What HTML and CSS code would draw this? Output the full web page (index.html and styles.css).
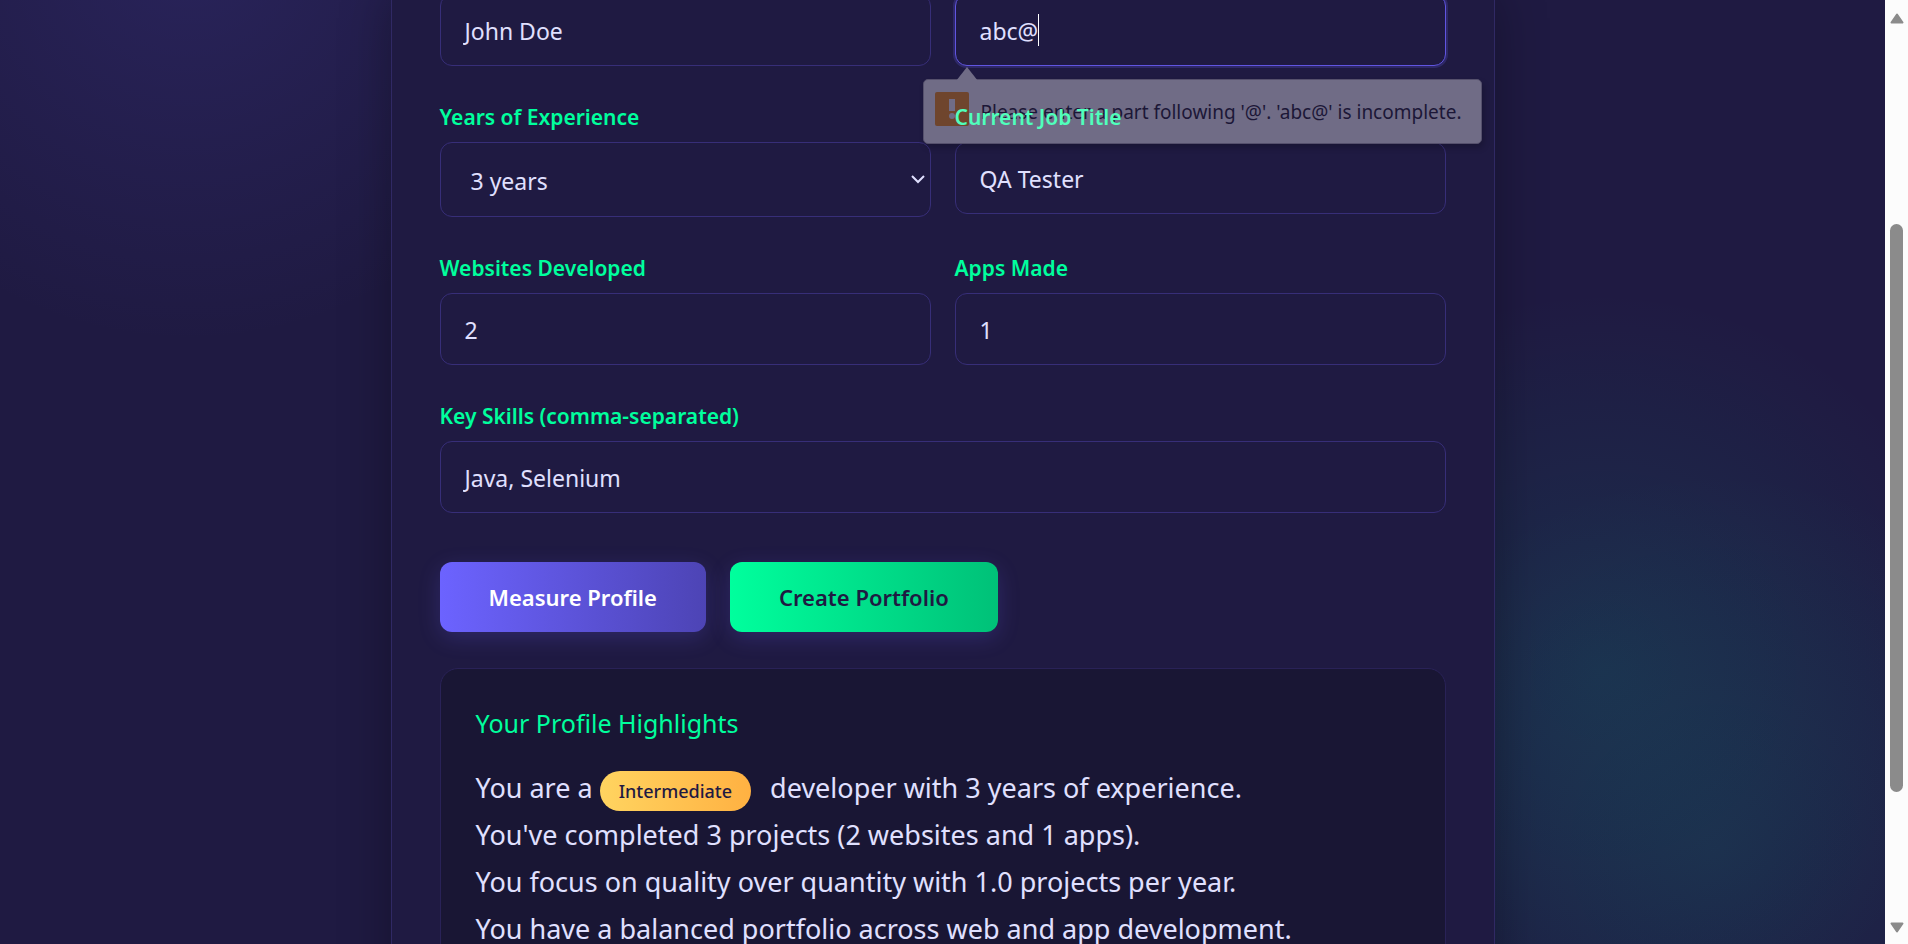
FILE: index.html
```html
<!DOCTYPE html>
<html lang="en">
<head>
<meta charset="utf-8">
<title>Developer Profile</title>
<link rel="stylesheet" href="styles.css">
</head>
<body>
<div class="page">
  <main class="card">
    <form class="form" novalidate>
      <div class="grid">
        <div class="field">
          <input class="control" type="text" aria-label="Full name" value="John Doe">
        </div>
        <div class="field">
          <div class="email">
            <input class="control control-active" type="text" inputmode="email" aria-label="Email" value="abc@">
            <span class="caret-line" aria-hidden="true"><span class="caret-text">abc@</span></span>
            <div class="tip" role="alert">
              <svg class="tip-arrow" viewBox="0 0 22 14" aria-hidden="true"><path d="M0 14 11 0l11 14z"/></svg>
              <svg class="tip-icon" viewBox="0 0 34 34" aria-hidden="true"><rect width="34" height="34" rx="2" fill="#6f452d"/><path d="M14 7h6v12h-6z" fill="#706c86"/><circle cx="17" cy="24" r="3" fill="#706c86"/></svg>
              <span>Please enter a part following '@'. 'abc@' is incomplete.</span>
            </div>
          </div>
        </div>
        <div class="field">
          <label class="label" for="years">Years of Experience</label>
          <div class="select-wrap">
            <select class="control select" id="years"><option>3 years</option></select>
            <svg class="chevron" viewBox="0 0 14 9" aria-hidden="true"><path d="M1 1l6 6 6-6"/></svg>
          </div>
        </div>
        <div class="field">
          <label class="label label-over" for="title">Current Job Title</label>
          <input class="control" id="title" type="text" value="QA Tester">
        </div>
        <div class="field">
          <label class="label" for="sites">Websites Developed</label>
          <input class="control" id="sites" type="text" inputmode="numeric" value="2">
        </div>
        <div class="field">
          <label class="label" for="apps">Apps Made</label>
          <input class="control" id="apps" type="text" inputmode="numeric" value="1">
        </div>
        <div class="field field-wide">
          <label class="label" for="skills">Key Skills (comma-separated)</label>
          <input class="control" id="skills" type="text" value="Java, Selenium">
        </div>
      </div>
      <div class="actions">
        <button class="btn btn-primary" type="button">Measure Profile</button>
        <button class="btn btn-accent" type="button">Create Portfolio</button>
      </div>
    </form>
    <section class="result">
      <h2 class="result-title">Your Profile Highlights</h2>
      <p class="result-text">You are a <span class="badge">Intermediate</span> developer with 3 years of experience.<br>
      You've completed 3 projects (2 websites and 1 apps).<br>
      You focus on quality over quantity with 1.0 projects per year.<br>
      You have a balanced portfolio across web and app development.</p>
    </section>
  </main>
</div>
<div class="scrollbar" aria-hidden="true">
  <svg class="arrow" viewBox="0 0 14 11"><path d="M7 1.500 12.500 9.500h-11z"/></svg>
  <div class="track"><div class="thumb"></div></div>
  <svg class="arrow" viewBox="0 0 14 11"><path d="M7 9.500 12.500 1.500h-11z"/></svg>
</div>
</body>
</html>
```
FILE: styles.css
```css
* { box-sizing: border-box; }

body {
  margin: 0;
  height: 100vh;
  display: flex;
  overflow: hidden;
  background: #1f1a42;
  color: #e0e0ff;
  font-family: "Noto Sans", "Open Sans", sans-serif;
}

.page {
  flex: 1;
  min-width: 0;
  overflow: hidden;
  background:
    radial-gradient(circle at 10% -6%, rgba(108, 99, 255, 0.13), transparent 400px),
    radial-gradient(circle at 85% 71%, rgba(0, 220, 170, 0.1), transparent 380px),
    radial-gradient(circle at 91% 90%, rgba(0, 220, 170, 0.08), transparent 380px),
    #1f1a42;
}

.card {
  max-width: 1104px;
  margin: -6px auto 0;
  padding: 0 48px 48px;
  border: solid #302964;
  border-width: 0 1px;
  background: #1f1a42;
  box-shadow: 0 0 48px rgba(0, 0, 0, 0.3);
}

.grid {
  display: grid;
  grid-template-columns: 1fr 1fr;
  column-gap: 24px;
  row-gap: 36px;
  align-items: start;
}

.field { display: flex; flex-direction: column; }
.field-wide { grid-column: 1 / -1; }

.label {
  margin-bottom: 10px;
  font-size: 21px;
  line-height: 30px;
  font-weight: 600;
  color: #00ff9d;
}

.label-over { position: relative; z-index: 3; color: #50ffbc; }

.control {
  width: 100%;
  height: 72px;
  padding: 2px 22px 0;
  border: 1px solid #372e78;
  border-radius: 12px;
  background: #1f1a42;
  color: #e0e0ff;
  font: inherit;
  font-size: 23px;
  text-indent: 2px;
  outline: none;
}

.control-active {
  border-color: #6055e0;
  box-shadow: 0 0 0 2px rgba(108, 99, 255, 0.2);
}

.select {
  display: block;
  height: 75px;
  padding: 2px 28px 0;
  appearance: none;
}

.select-wrap, .email { position: relative; }

.chevron {
  position: absolute;
  right: 6px;
  top: 33px;
  width: 14px;
  height: 9px;
  fill: none;
  stroke: #e0e0ff;
  stroke-width: 2;
}

.caret-line {
  position: absolute;
  left: 25px;
  top: 20px;
  height: 32px;
  border-right: 1px solid #fff;
  font-size: 23px;
}
.caret-text { visibility: hidden; }

.tip {
  position: absolute;
  z-index: 2;
  top: 85px;
  left: -32px;
  display: flex;
  gap: 12px;
  width: max-content;
  height: 65px;
  padding: 12px 20px 12px 11px;
  border: 1px solid #55506c;
  border-radius: 5px;
  background: #706c86;
  box-shadow: 2px 4px 6px rgba(0, 0, 0, 0.2);
  color: #1c1737;
  font-size: 19px;
  line-height: 40px;
  white-space: nowrap;
}
.tip-arrow { position: absolute; left: 32px; top: -13px; width: 22px; height: 14px; fill: #706c86; }
.tip-icon { width: 34px; height: 34px; }

.actions { display: flex; gap: 24px; margin-top: 49px; }

.btn {
  height: 70px;
  padding: 0 49px;
  border: 0;
  border-radius: 12px;
  font: inherit;
  font-size: 22px;
  font-weight: 600;
  box-shadow: 0 6px 22px rgba(108, 99, 255, 0.2);
}
.btn-primary { background: linear-gradient(90deg, #6c63ff, #4d44b5); color: #fff; }
.btn-accent { background: linear-gradient(90deg, #00ff9d, #00c178); color: #1f1a42; }

.result {
  margin-top: 36px;
  padding: 35px;
  border: 1px solid #292257;
  border-radius: 18px;
  background: #191634;
}

.result-title {
  margin: 0 0 22px;
  font-size: 25px;
  line-height: 38px;
  font-weight: 400;
  color: #00ff9d;
}

.result-text { margin: 0; font-size: 27px; line-height: 47px; }

.badge {
  display: inline-block;
  margin-right: 12px;
  padding: 0 19px;
  border-radius: 20px;
  background: linear-gradient(90deg, #ffd460, #ffb142);
  color: #1f1a42;
  font-size: 18px;
  font-weight: 500;
  line-height: 40px;
  vertical-align: middle;
}

.scrollbar {
  width: 23px;
  padding: 13px 0 11px;
  display: flex;
  flex-direction: column;
  align-items: center;
  background: #fcfcfc;
}
.arrow { width: 14px; height: 11px; fill: #8b8b8b; stroke: #8b8b8b; stroke-width: 2; stroke-linejoin: round; }
.track { flex: 1; display: flex; flex-direction: column; padding-top: 200px; }
.thumb { width: 13px; flex: 0 0 568px; border-radius: 7px; background: #8b8b8b; }
```
